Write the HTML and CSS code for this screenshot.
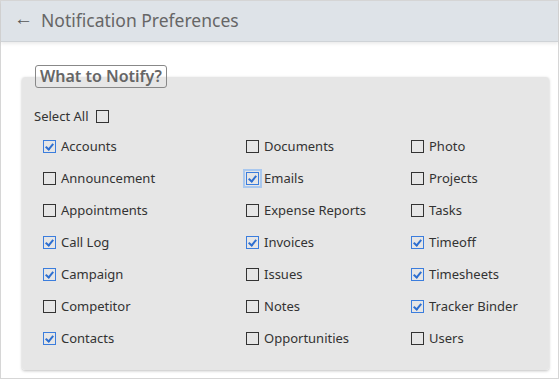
FILE: index.html
```html
<!DOCTYPE html>
<html lang="en">
<head>
    <meta charset="UTF-8">
    <title>Notification Preferences</title>
    <link rel="stylesheet" href="styles.css">
</head>
<body>
    <div class="frame">
        <header class="topbar">
            <span class="back">&larr;</span>
            <h1>Notification Preferences</h1>
        </header>

        <main>
            <fieldset class="card">
                <legend>What to Notify?</legend>

                <label class="select-all">
                    Select All
                    <input type="checkbox">
                </label>

                <div class="grid">
                    <label><input type="checkbox" checked> Accounts</label>
                    <label><input type="checkbox"> Documents</label>
                    <label><input type="checkbox"> Photo</label>

                    <label><input type="checkbox"> Announcement</label>
                    <label><input type="checkbox" class="focus" checked> Emails</label>
                    <label><input type="checkbox"> Projects</label>

                    <label><input type="checkbox"> Appointments</label>
                    <label><input type="checkbox"> Expense Reports</label>
                    <label><input type="checkbox"> Tasks</label>

                    <label><input type="checkbox" checked> Call Log</label>
                    <label><input type="checkbox" checked> Invoices</label>
                    <label><input type="checkbox" checked> Timeoff</label>

                    <label><input type="checkbox" checked> Campaign</label>
                    <label><input type="checkbox"> Issues</label>
                    <label><input type="checkbox" checked> Timesheets</label>

                    <label><input type="checkbox"> Competitor</label>
                    <label><input type="checkbox"> Notes</label>
                    <label><input type="checkbox" checked> Tracker Binder</label>

                    <label><input type="checkbox" checked> Contacts</label>
                    <label><input type="checkbox"> Opportunities</label>
                    <label><input type="checkbox"> Users</label>
                </div>
            </fieldset>
        </main>
    </div>
</body>
</html>
```

FILE: styles.css
```css
body {
    margin: 0;
    font-family: 'Noto Sans', sans-serif;
    color: #333;
    background: #fff;
}

.frame {
    height: 100vh;
    box-sizing: border-box;
    border: 1px solid #d6d6d6;
}

.topbar {
    display: flex;
    align-items: center;
    height: 37px;
    padding: 0 0 3px 13px;
    background: #dee3e8;
    border-bottom: 1px solid #cfd3d7;
    box-shadow: 0 2px 3px rgba(0, 0, 0, 0.08);
}

.back {
    font-size: 19px;
    line-height: 1;
    color: #555;
    width: 27px;
    margin-top: -2px;
}

.topbar h1 {
    margin: 0;
    font-size: 17.5px;
    font-weight: 400;
    color: #666;
}

main {
    padding: 23px 9px 0 21px;
}

.card {
    margin: 0;
    padding: 19px 0 23px 12px;
    border: 0;
    border-radius: 3px;
    background: #e6e6e6;
    box-shadow: 0 1px 3px rgba(0, 0, 0, 0.25);
}

.card legend {
    margin-left: 1px;
    padding: 0 4px;
    font-size: 16px;
    font-weight: 600;
    color: #666;
    border: 1px solid #888;
    border-radius: 3px;
    line-height: 21px;
}

label {
    display: flex;
    align-items: center;
    gap: 5px;
    font-size: 13px;
    line-height: 18px;
}

.select-all {
    gap: 8px;
    margin-bottom: 12px;
}

.grid {
    display: grid;
    grid-template-columns: 203px 165px auto;
    row-gap: 14px;
    padding-left: 9px;
}

input[type="checkbox"] {
    appearance: none;
    margin: 0;
    width: 13px;
    height: 13px;
    border: 1px solid #333;
    background: transparent;
    box-sizing: border-box;
    position: relative;
}

input[type="checkbox"]:checked {
    border-color: #3b7ddd;
}

input[type="checkbox"]:checked::after {
    content: "";
    position: absolute;
    left: 3px;
    top: 1px;
    width: 3px;
    height: 6px;
    border: solid #2e6fd0;
    border-width: 0 2px 2px 0;
    transform: rotate(40deg);
}

input.focus {
    outline: 2px solid #a9c8ef;
    outline-offset: 1px;
}
```
